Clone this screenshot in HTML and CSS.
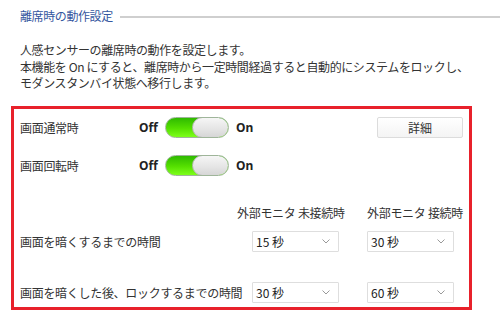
FILE: index.html
```html
<!DOCTYPE html>
<html lang="ja">
<head>
<meta charset="utf-8">
<link rel="stylesheet" href="styles.css">
</head>
<body>
<div class="page">
  <div class="heading">
    <span class="heading-text">離席時の動作設定</span>
    <span class="heading-line"></span>
  </div>
  <p class="desc">人感センサーの離席時の動作を設定します。<br>本機能を On にすると、離席時から一定時間経過すると自動的にシステムをロックし、<br>モダンスタンバイ状態へ移行します。</p>
  <div class="box">
    <div class="row row1">
      <span class="label">画面通常時</span>
      <div class="switch-group">
        <span class="sw-off">Off</span>
        <span class="switch"><span class="knob"></span></span>
        <span class="sw-on">On</span>
      </div>
      <button class="btn">詳細</button>
    </div>
    <div class="row row2">
      <span class="label">画面回転時</span>
      <div class="switch-group">
        <span class="sw-off">Off</span>
        <span class="switch"><span class="knob"></span></span>
        <span class="sw-on">On</span>
      </div>
    </div>
    <div class="grid">
      <span class="gh"></span>
      <span class="gh">外部モニタ 未接続時</span>
      <span class="gh">外部モニタ 接続時</span>

      <span class="glabel r1">画面を暗くするまでの時間</span>
      <div class="cell r1 c1"><div class="select"><span>15 秒</span><svg class="chev" width="8" height="5" viewBox="0 0 8 5"><polyline points="0.5,0.5 4,4 7.5,0.5" fill="none" stroke="#999" stroke-width="1"/></svg></div></div>
      <div class="cell r1"><div class="select"><span>30 秒</span><svg class="chev" width="8" height="5" viewBox="0 0 8 5"><polyline points="0.5,0.5 4,4 7.5,0.5" fill="none" stroke="#999" stroke-width="1"/></svg></div></div>

      <span class="glabel r2">画面を暗くした後、ロックするまでの時間</span>
      <div class="cell r2 c1"><div class="select"><span>30 秒</span><svg class="chev" width="8" height="5" viewBox="0 0 8 5"><polyline points="0.5,0.5 4,4 7.5,0.5" fill="none" stroke="#999" stroke-width="1"/></svg></div></div>
      <div class="cell r2"><div class="select"><span>60 秒</span><svg class="chev" width="8" height="5" viewBox="0 0 8 5"><polyline points="0.5,0.5 4,4 7.5,0.5" fill="none" stroke="#999" stroke-width="1"/></svg></div></div>
    </div>
  </div>
</div>
</body>
</html>
```

FILE: styles.css
```css
* { box-sizing: border-box; }
html, body {
  margin: 0;
  padding: 0;
  background: #fff;
}
body {
  width: 500px;
  height: 312px;
  overflow: hidden;
  font-family: "Noto Sans CJK JP", "Noto Sans", sans-serif;
  font-size: 12px;
  color: #333;
}
.page {
  padding-top: 8px;
}
.heading {
  display: flex;
  align-items: center;
  padding-left: 20px;
  height: 16px;
}
.heading-text {
  color: #3557a0;
  font-size: 12px;
  line-height: 16px;
  letter-spacing: -0.4px;
}
.heading-line {
  flex: 1;
  height: 2px;
  background: #cfcfcf;
  margin-left: 7px;
  margin-top: 1px;
}
.desc {
  margin: 18px 0 0 20px;
  line-height: 16.5px;
  letter-spacing: -0.4px;
  color: #333;
}
.box {
  margin: 14px 0 0 11px;
  width: 461px;
  height: 204px;
  border: 3px solid #e8212b;
  padding: 0 6px 0 6px;
}
.row {
  display: flex;
  align-items: center;
  height: 22px;
}
.row1 { margin-top: 8px; }
.row2 { margin-top: 16px; }
.label {
  width: 119px;
  letter-spacing: -0.3px;
}
.switch-group {
  display: flex;
  align-items: center;
}
.sw-off, .sw-on {
  font-family: "Noto Sans", sans-serif;
  font-weight: bold;
  font-size: 12px;
  color: #222;
}
.sw-off { width: 26px; }
.sw-on { margin-left: 7px; }
.switch {
  position: relative;
  width: 64px;
  height: 21px;
  border-radius: 11px;
  border: 1px solid #9fb59a;
  background: linear-gradient(#2fba00, #55e000 55%, #7dff1a);
  overflow: hidden;
}
.knob {
  position: absolute;
  right: -1px;
  top: -1px;
  width: 37px;
  height: 21px;
  border-radius: 11px;
  border: 1px solid #b8b8b8;
  background: linear-gradient(#f6f6f6, #e4e4e4 60%, #d6d6d6);
}
.btn {
  margin-left: auto;
  width: 86px;
  height: 21px;
  margin-top: -1px;
  border: 1px solid #dcdcdc;
  border-radius: 2px;
  background: linear-gradient(#ffffff, #f4f4f4);
  font-family: "Noto Sans CJK JP", sans-serif;
  font-size: 12px;
  color: #333;
  padding: 0;
}
.grid {
  display: grid;
  grid-template-columns: 217px 130px auto;
  grid-auto-rows: auto;
  margin-top: 28px;
  align-items: center;
}
.gh {
  line-height: 16px;
  letter-spacing: -0.3px;
  white-space: nowrap;
}
.glabel {
  white-space: nowrap;
  letter-spacing: -0.3px;
}
.r1 { margin-top: 10px; }
.r2 { margin-top: 30px; }
.grid .r1, .grid .r2 { align-self: stretch; display: flex; align-items: center; height: 21px; }
.c1 { padding-left: 15px; }
.select {
  width: 87px;
  height: 21px;
  border: 1px solid #dedede;
  border-radius: 1px;
  background: #fff;
  display: flex;
  align-items: center;
  justify-content: space-between;
  padding: 0 8px 0 3px;
  color: #222;
}
.chev { display: block; }
```
